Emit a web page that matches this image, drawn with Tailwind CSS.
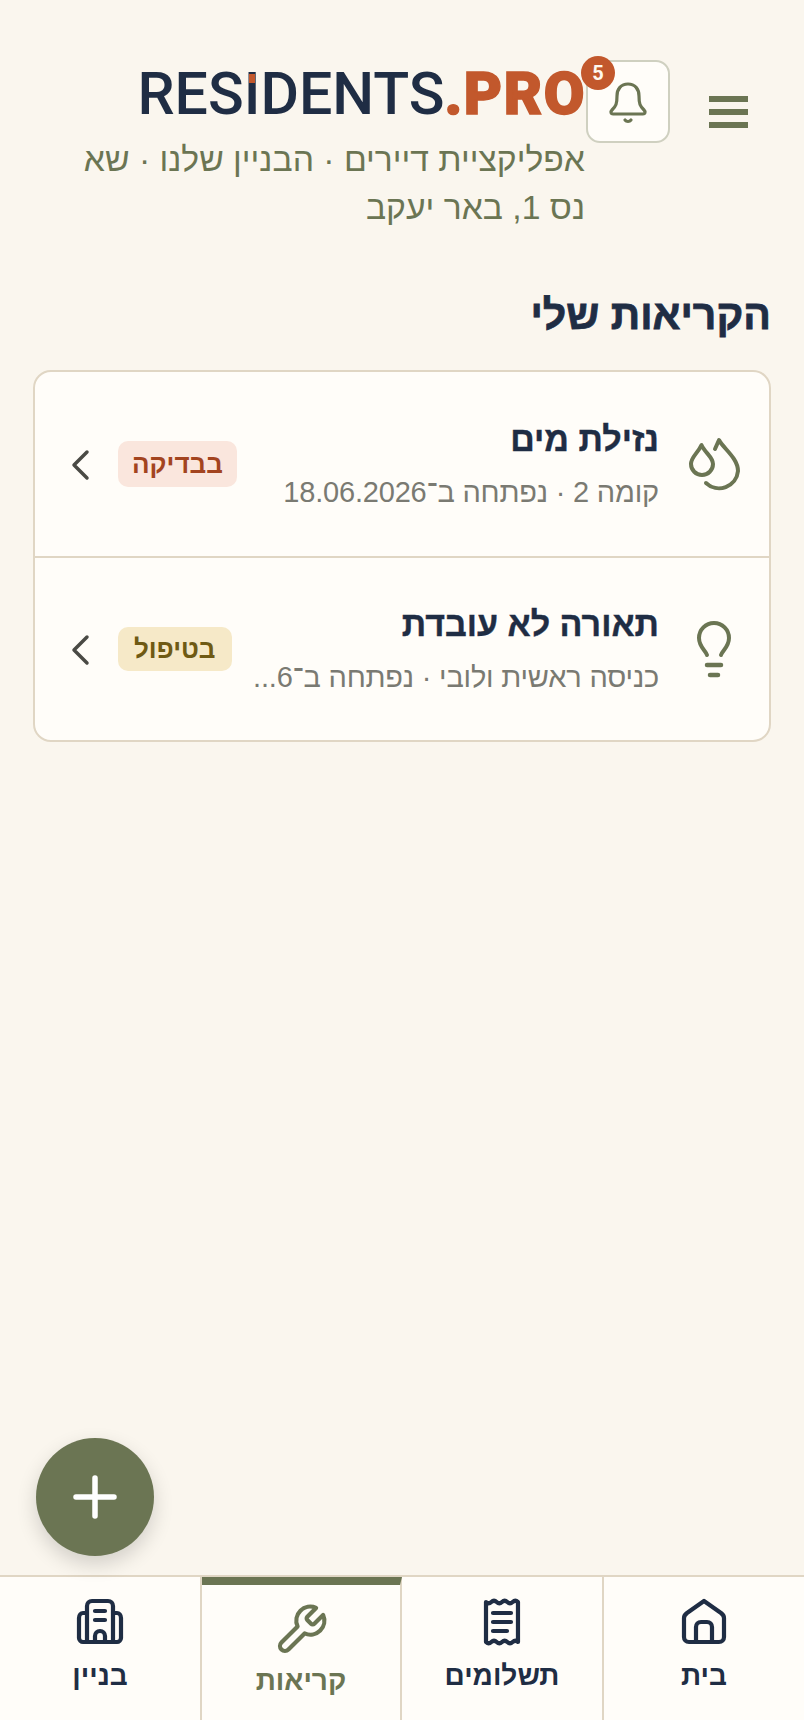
<!DOCTYPE html>
<html lang="he" dir="rtl">
  <head>
    <meta charset="UTF-8" />
    <meta name="viewport" content="width=device-width, initial-scale=1.0" />
    <title>Residents.pro</title>
    <script src="https://cdn.jsdelivr.net/npm/@tailwindcss/browser@4"></script>
  </head>
  <body class="bg-[#faf6ee] font-['Liberation_Sans',sans-serif] text-[#1f2d44]">
    <div class="relative flex h-[1720px] w-[804px] flex-col overflow-hidden">
      <main class="min-h-0 flex-1">
        <!-- header -->
        <header class="flex items-start pt-[60px] pr-[56px]">
          <button class="mt-[36px] flex w-[39px] shrink-0 flex-col gap-[7px]">
            <span class="h-[6px] bg-[#6b7553]"></span>
            <span class="h-[6px] bg-[#6b7553]"></span>
            <span class="h-[6px] bg-[#6b7553]"></span>
          </button>
          <button class="relative mr-[39px] flex h-[83px] w-[84px] shrink-0 items-center justify-center rounded-[14px] border-2 border-[#cfd0c0] bg-[#fffdf9]">
            <svg class="mt-[4px] h-[50px] w-[44px] text-[#6b7553]" viewBox="0 0 44 50" fill="none" stroke="currentColor" stroke-width="3.200" stroke-linecap="round" stroke-linejoin="round">
              <path d="M22 5c-7 0-11 5-11 12 0 8-1 10-5 14-2 2-1 4 1 4h30c2 0 3-2 1-4-4-4-5-6-5-14 0-7-4-12-11-12z" />
              <path d="M19 41c1.500 2 4.500 2 6 0" />
            </svg>
            <span class="absolute -top-[6px] -left-[7px] flex h-[34px] w-[34px] items-center justify-center rounded-full bg-[#c2582c] font-['Roboto',sans-serif] text-[20px] font-bold text-[#fff8ee]">5</span>
          </button>
          <div class="w-[512px] shrink-0 pt-[2px]">
            <div dir="ltr" class="flex justify-end font-['Roboto',sans-serif] text-[59px] leading-[64px]">
              <span class="font-medium text-[#1f2d44]">RES<span class="relative">I<span class="absolute top-[15px] left-[5px] h-[9px] w-[6px] bg-[#c2582c]"></span></span>DENTS</span><span class="font-black tracking-[1.500px] text-[#c2582c] [-webkit-text-stroke:1.500px_#c2582c]">.PRO</span>
            </div>
            <p class="mt-[9px] mr-[1px] text-[33.700px] leading-[48px] text-[#6b7553]">אפליקציית דיירים · הבניין שלנו · שא נס 1, באר יעקב</p>
          </div>
        </header>

        <section class="px-[33px] pt-[59px]">
          <h1 class="text-[41px] leading-[50px] font-bold [-webkit-text-stroke:0.8px_#1f2d44]">הקריאות שלי</h1>

          <div class="mt-[30px] overflow-hidden rounded-[18px] border-2 border-[#e0d6c4] bg-[#fffdf9]">
            <!-- leak -->
            <div class="flex h-[186px] items-center gap-[24px] border-b-2 border-[#e0d6c4] pr-[24px] pl-[31px]">
              <svg class="ml-[2px] h-[60px] w-[60px] shrink-0 text-[#6b7553]" viewBox="0 0 60 60" fill="none" stroke="currentColor" stroke-width="4" stroke-linecap="round" stroke-linejoin="round">
                <path d="M16.500 11C13 19 6 23 6 30a11 11 0 0 0 22 0c0-7-8-11-11.500-19z" />
                <path d="M30 15l4-9c4 8 19 18 19 31a19 19 0 0 1-32 12" />
              </svg>
              <div class="min-w-0 flex-1">
                <div class="truncate text-[34px] leading-[44px] font-bold [-webkit-text-stroke:0.4px_#1f2d44]">נזילת מים</div>
                <div class="mt-[11px] truncate text-[29px] leading-[40px] tracking-[-0.2px] text-[#7a7a72]">קומה 2 · נפתחה ב־18.06.2026</div>
              </div>
              <span class="flex h-[46px] shrink-0 items-center rounded-[10px] bg-[#fae6dd] px-[14px] text-[26px] font-bold text-[#a3441f]">בבדיקה</span>
              <svg class="mt-[2px] h-[32px] w-[28px] shrink-0 text-[#4a4a45]" viewBox="0 0 28 32" fill="none" stroke="currentColor" stroke-width="3.500" stroke-linecap="round" stroke-linejoin="round">
                <path d="M21 3L8 16l13 13" />
              </svg>
            </div>
            <!-- lighting -->
            <div class="flex h-[182px] items-center gap-[24px] pr-[24px] pl-[31px]">
              <svg class="ml-[2px] h-[60px] w-[60px] shrink-0 text-[#6b7553]" viewBox="0 0 60 60" fill="none" stroke="currentColor" stroke-width="4" stroke-linecap="round" stroke-linejoin="round">
                <path d="M22 36c-1-4-8-8-8-17a15 15 0 0 1 30 0c0 9-7 13-8 17" />
                <path d="M22 46h14" stroke-width="4.500" />
                <path d="M25 56h8" stroke-width="4.500" />
              </svg>
              <div class="min-w-0 flex-1">
                <div class="truncate text-[34px] leading-[44px] font-bold [-webkit-text-stroke:0.4px_#1f2d44]">תאורה לא עובדת</div>
                <div class="mt-[11px] text-[29px] leading-[40px] tracking-[-0.2px] whitespace-nowrap text-[#7a7a72]">כניסה ראשית ולובי · נפתחה ב־6...</div>
              </div>
              <span class="flex h-[44px] shrink-0 items-center rounded-[10px] bg-[#f6e9c8] px-[16px] text-[26px] font-bold text-[#6f5a14]">בטיפול</span>
              <svg class="mt-[2px] h-[32px] w-[28px] shrink-0 text-[#4a4a45]" viewBox="0 0 28 32" fill="none" stroke="currentColor" stroke-width="3.500" stroke-linecap="round" stroke-linejoin="round">
                <path d="M21 3L8 16l13 13" />
              </svg>
            </div>
          </div>
        </section>
      </main>

      <!-- add button -->
      <button class="absolute top-[1438px] left-[36px] flex h-[118px] w-[118px] items-center justify-center rounded-full bg-[#6b7553] shadow-[0_8px_20px_rgba(0,0,0,0.16)]">
        <svg class="h-[48px] w-[48px] text-white" viewBox="0 0 48 48" fill="none" stroke="currentColor" stroke-width="5.500" stroke-linecap="round">
          <path d="M24 5v38M5 24h38" />
        </svg>
      </button>

      <!-- bottom nav -->
      <nav class="grid h-[145px] shrink-0 grid-cols-[200px_202px_200px_202px] border-t-2 border-[#e0d6c4] bg-[#fffdf9]">
        <a class="flex flex-col items-center pt-[21px]">
          <svg class="h-[48px] w-[48px]" viewBox="0 0 48 48" fill="none" stroke="currentColor" stroke-width="4.200" stroke-linecap="round" stroke-linejoin="round">
            <path d="M24 3L7 15c-2 1.500-3 3-3 5v19c0 3 2 5 5 5h30c3 0 5-2 5-5V20c0-2-1-3.500-3-5z" />
            <path d="M16 44V29c0-3 2-5 5-5h6c3 0 5 2 5 5v15" />
          </svg>
          <span class="mt-[10px] text-[28px] leading-[40px] font-bold">בית</span>
        </a>
        <a class="flex flex-col items-center border-r-2 border-[#e0d6c4] pt-[21px]">
          <svg class="h-[48px] w-[48px]" viewBox="0 0 48 48" fill="none" stroke="currentColor" stroke-width="4.200" stroke-linecap="round" stroke-linejoin="round">
            <path d="M8 4q2.670 2.500 5.330 0t5.330 0 5.330 0 5.330 0 5.330 0 5.330 0V44q-2.670-2.500-5.330 0t-5.330 0-5.330 0-5.330 0-5.330 0-5.330 0z" />
            <path d="M15 15h18M15 24h18M15 33h14" />
          </svg>
          <span class="mt-[10px] text-[28px] leading-[40px] font-bold">תשלומים</span>
        </a>
        <a class="flex flex-col items-center border-r-2 border-t-[8px] border-[#e0d6c4] border-t-[#6b7553] pt-[17px] text-[#6b7553]">
          <svg class="h-[56px] w-[56px]" viewBox="0 0 24 24" fill="none" stroke="currentColor" stroke-width="1.800" stroke-linecap="round" stroke-linejoin="round">
            <path d="M14.700 6.300a1 1 0 0 0 0 1.400l1.600 1.600a1 1 0 0 0 1.400 0l3.770-3.770a6 6 0 0 1-7.940 7.940l-6.910 6.910a2.120 2.120 0 0 1-3-3l6.910-6.910a6 6 0 0 1 7.940-7.940l-3.760 3.760z" />
          </svg>
          <span class="mt-[3px] text-[28px] leading-[40px] font-bold">קריאות</span>
        </a>
        <a class="flex flex-col items-center border-r-2 border-[#e0d6c4] pt-[21px]">
          <svg class="h-[48px] w-[48px]" viewBox="0 0 48 48" fill="none" stroke="currentColor" stroke-width="4.200" stroke-linecap="round" stroke-linejoin="round">
            <path d="M11 44V8c0-3 2-5 5-5h16c3 0 5 2 5 5v36z" />
            <path d="M11 15H7c-2 0-4 2-4 5v20c0 2 2 4 4 4h34c2 0 4-2 4-4V20c0-3-2-5-4-5h-4" />
            <path d="M19 13h10M19 22h10" />
            <path d="M19 44v-6a5 5 0 0 1 10 0v6" />
          </svg>
          <span class="mt-[10px] text-[28px] leading-[40px] font-bold">בניין</span>
        </a>
      </nav>
    </div>
  </body>
</html>
